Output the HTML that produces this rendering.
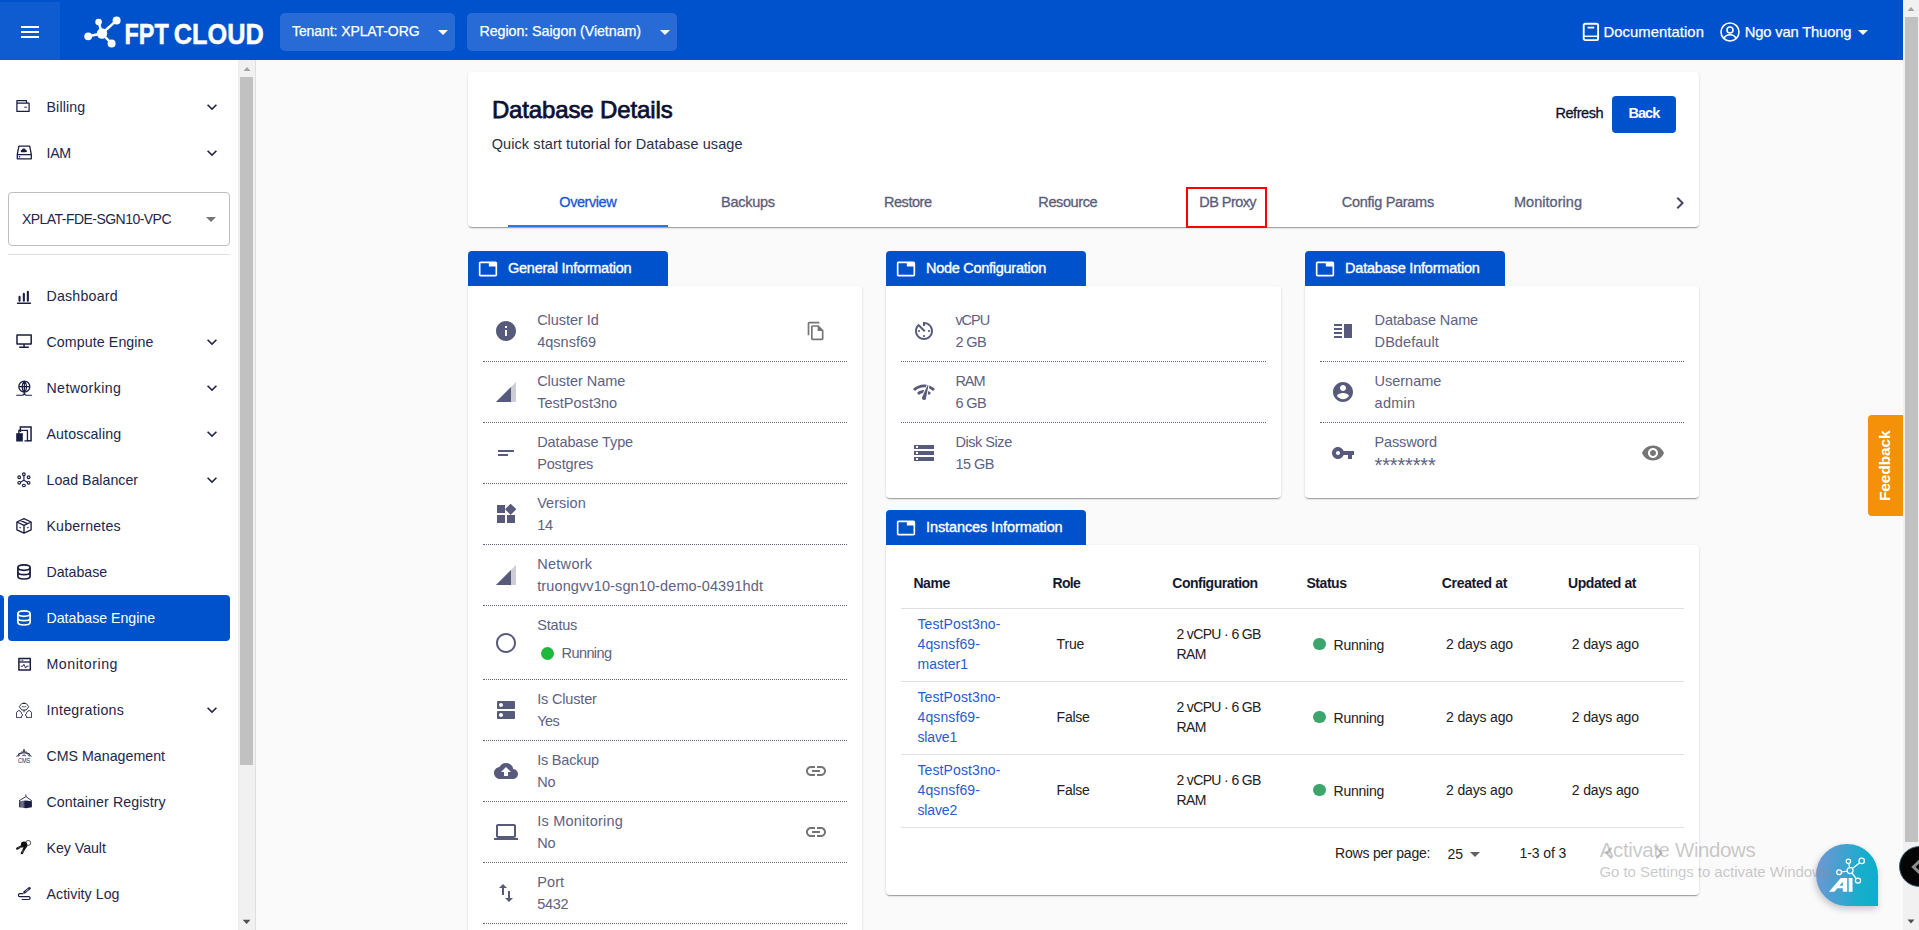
<!DOCTYPE html>
<html><head><meta charset="utf-8"><title>Database Details</title><style>
html,body{margin:0;padding:0}
body{width:1919px;height:930px;overflow:hidden;position:relative;background:#fafafa;font-family:"Liberation Sans", sans-serif;}
.a{position:absolute;display:block}
.t{position:absolute;white-space:pre;line-height:1;font-family:"Liberation Sans", sans-serif;}
</style></head>
<body>
<div class="a" style="left:0px;top:0px;width:1903px;height:60px;background:#0052cc;"></div>
<div class="a" style="left:0px;top:2px;width:60px;height:58px;background:#0f5bd0;"></div>
<div class="a" style="left:21px;top:26px;width:18px;height:2px;background:#fff;"></div>
<div class="a" style="left:21px;top:31px;width:18px;height:2px;background:#fff;"></div>
<div class="a" style="left:21px;top:36px;width:18px;height:2px;background:#fff;"></div>
<svg class="a" style="left:84px;top:16px;" width="38" height="32" viewBox="0 0 38 32" fill="#fff"><g stroke="#fff" stroke-width="2.5" stroke-linecap="round"><line x1="4.2" y1="20.3" x2="18" y2="17.5"/><line x1="18" y1="17.5" x2="14.6" y2="6"/><line x1="18" y1="17.5" x2="32.6" y2="4.4"/><line x1="18" y1="17.5" x2="27.6" y2="27.6"/></g><circle cx="4.2" cy="20.3" r="3.9"/><circle cx="18" cy="17.5" r="5.200"/><circle cx="14.6" cy="6" r="3.3"/><circle cx="32.6" cy="4.4" r="4"/><circle cx="27.6" cy="27.6" r="4"/></svg>
<svg class="a" style="left:124px;top:18px" width="144" height="32" viewBox="0 0 144 32"><g font-family="Liberation Sans, sans-serif" font-weight="700" font-size="30" fill="#fff" stroke="#fff" stroke-width=".5"><text x="0.500" y="26.1" textLength="44.3" lengthAdjust="spacingAndGlyphs">FPT</text><text x="49.700" y="26.1" textLength="90" lengthAdjust="spacingAndGlyphs">CLOUD</text></g></svg>
<div class="a" style="left:280px;top:13px;width:175px;height:38px;background:#286bd6;border-radius:5px;"></div>
<div class="a" style="left:467px;top:13px;width:210px;height:38px;background:#286bd6;border-radius:5px;"></div>
<span class="t" style="left:292.00px;top:24.25px;font-size:14px;color:#fff;letter-spacing:-0.083px;-webkit-text-stroke:.25px #fff;">Tenant: XPLAT-ORG</span>
<span class="t" style="left:479.50px;top:24.11px;font-size:14.3px;color:#fff;letter-spacing:-0.081px;-webkit-text-stroke:.25px #fff;">Region: Saigon (Vietnam)</span>
<svg class="a" style="left:431px;top:20px;" width="24" height="24" viewBox="0 0 24 24" fill="#fff"><path d="M7 10l5 5 5-5z"/></svg>
<svg class="a" style="left:653px;top:20px;" width="24" height="24" viewBox="0 0 24 24" fill="#fff"><path d="M7 10l5 5 5-5z"/></svg>
<svg class="a" style="left:1582px;top:22px;" width="18" height="20" viewBox="0 0 18 20" fill="#fff"><rect x="1.7" y="1.7" width="14.4" height="16.4" rx="1.6" fill="none" stroke="#fff" stroke-width="1.9"/><path d="M1.7 14.3h14.4" stroke="#fff" stroke-width="1.5"/><path d="M5.6 5.6h6.6" stroke="#fff" stroke-width="1.8"/></svg>
<span class="t" style="left:1603.40px;top:24.77px;font-size:14.8px;color:#fff;letter-spacing:0.082px;-webkit-text-stroke:.25px #fff;">Documentation</span>
<svg class="a" style="left:1720px;top:22px;" width="20" height="20" viewBox="0 0 20 20" fill="#fff"><circle cx="10" cy="10" r="9" fill="none" stroke="#fff" stroke-width="1.6"/><circle cx="10" cy="8" r="3" fill="none" stroke="#fff" stroke-width="1.6"/><path d="M4 16.300c1.200-2.600 3.500-3.600 6-3.600s4.800 1 6 3.600" fill="none" stroke="#fff" stroke-width="1.6"/></svg>
<span class="t" style="left:1744.80px;top:24.77px;font-size:14.8px;color:#fff;letter-spacing:-0.190px;-webkit-text-stroke:.25px #fff;">Ngo van Thuong</span>
<svg class="a" style="left:1851px;top:20px;" width="24" height="24" viewBox="0 0 24 24" fill="#fff"><path d="M7 10l5 5 5-5z"/></svg>
<div class="a" style="left:1903px;top:0px;width:16px;height:930px;background:#f1f1f1;"></div>
<div class="a" style="left:1905px;top:17px;width:13px;height:825px;background:#c1c1c1;"></div>
<svg class="a" style="left:1903px;top:0px;" width="16" height="17" viewBox="0 0 16 17" fill="#a3a3a3"><path d="M4.500 11l3.500-4 3.500 4z"/></svg>
<svg class="a" style="left:1903px;top:913px;" width="16" height="17" viewBox="0 0 16 17" fill="#505050"><path d="M4.500 6.500l3.500 4 3.500-4z"/></svg>
<div class="a" style="left:0px;top:60px;width:238px;height:870px;background:#fff;"></div>
<div class="a" style="left:238px;top:60px;width:18px;height:870px;background:#f1f1f1;box-shadow:inset 1px 0 0 #ececec, inset -1px 0 0 #dedede;"></div>
<div class="a" style="left:240px;top:77px;width:13px;height:688px;background:#c1c1c1;"></div>
<svg class="a" style="left:239px;top:60px;" width="16" height="17" viewBox="0 0 16 17" fill="#a3a3a3"><path d="M4.500 11l3.500-4 3.500 4z"/></svg>
<svg class="a" style="left:239px;top:913px;" width="16" height="17" viewBox="0 0 16 17" fill="#505050"><path d="M3.700 6.800l3.900 4.300 3.900-4.300z"/></svg>
<div class="a" style="left:0px;top:595px;width:4px;height:46px;background:#0052cc;border-radius:0 4px 4px 0;"></div>
<div class="a" style="left:8px;top:595px;width:222px;height:46px;background:#0052cc;border-radius:4px;"></div>
<svg class="a" style="left:16px;top:98.5px;" width="16" height="16" viewBox="0 0 16 16" fill="#1a1d44"><path fill="none" stroke="#1a1d44" stroke-width="1.25" stroke-linejoin="round" d="M0.9 4.1h12.2v8.3H0.9zM0.9 4.1V1.7h9.6v2.4"/><rect x="8.3" y="7.7" width="2.6" height="1"/></svg>
<span class="t" style="left:46.50px;top:99.66px;font-size:14.2px;color:#23264b;letter-spacing:0.149px;">Billing</span>
<svg class="a" style="left:202px;top:96.5px;" width="20" height="20" viewBox="0 0 24 24" fill="#23264b"><path d="M16.59 8.59L12 13.170 7.410 8.590 6 10l6 6 6-6z"/></svg>
<svg class="a" style="left:16px;top:144.5px;" width="16" height="16" viewBox="0 0 16 16" fill="#1a1d44"><path fill="none" stroke="#1a1d44" stroke-width="1.3" stroke-linejoin="round" d="M1.3 9.300L2.900 1.200h10.800l1.600 8.100v4.500H1.300zM1.300 9.600h14"/><path d="M6.300 7.200c-1 0-1.600-.5-1.600-1.300 0-.6.500-1.100 1.200-1.200.3-.7 1-1.200 1.900-1.200 1 0 1.700.5 1.900 1.400.9.100 1.400.5 1.400 1.200s-.6 1.100-1.500 1.100z"/><rect x="2.900" y="11.100" width="1.300" height="1.300"/></svg>
<span class="t" style="left:46.50px;top:145.66px;font-size:14.2px;color:#23264b;letter-spacing:-0.311px;">IAM</span>
<svg class="a" style="left:202px;top:142.5px;" width="20" height="20" viewBox="0 0 24 24" fill="#23264b"><path d="M16.59 8.59L12 13.170 7.410 8.590 6 10l6 6 6-6z"/></svg>
<svg class="a" style="left:16px;top:288px;" width="16" height="16" viewBox="0 0 16 16" fill="#1a1d44"><path d="M3.550 8.800v4M7.850 5.900v6.900M11.850 3.700v9.100" stroke="#1a1d44" stroke-width="2.100" stroke-linecap="round"/><path d="M1.500 15.200h13" stroke="#1a1d44" stroke-width="1.400" stroke-linecap="round"/></svg>
<span class="t" style="left:46.50px;top:289.16px;font-size:14.2px;color:#23264b;letter-spacing:0.209px;">Dashboard</span>
<svg class="a" style="left:16px;top:334px;" width="16" height="16" viewBox="0 0 16 16" fill="#1a1d44"><path fill="none" stroke="#1a1d44" stroke-width="1.500" stroke-linejoin="round" d="M1 1h14.200v9H1z"/><rect x="7.300" y="10" width="1.500" height="3"/><rect x="3" y="12.500" width="10" height="1.500" rx=".7"/></svg>
<span class="t" style="left:46.50px;top:335.16px;font-size:14.2px;color:#23264b;letter-spacing:0.101px;">Compute Engine</span>
<svg class="a" style="left:202px;top:332.0px;" width="20" height="20" viewBox="0 0 24 24" fill="#23264b"><path d="M16.59 8.59L12 13.170 7.410 8.590 6 10l6 6 6-6z"/></svg>
<svg class="a" style="left:16px;top:380px;" width="16" height="16" viewBox="0 0 16 16" fill="#1a1d44"><g fill="none" stroke="#1a1d44" stroke-width="1.250"><circle cx="8.350" cy="6.650" r="5.500"/><path d="M2.900 6.650h10.900M8.350 1.200c-3 2.700-3 8.200 0 10.900M8.350 1.200c3 2.700 3 8.200 0 10.900M8.350 1.200v11"/><path d="M.3 15.300h5.900c1.300 0 2.100-1.300 2.150-3 .05 1.700.85 3 2.150 3h5.400" stroke-width="1.100"/></g></svg>
<span class="t" style="left:46.50px;top:381.16px;font-size:14.2px;color:#23264b;letter-spacing:0.373px;">Networking</span>
<svg class="a" style="left:202px;top:378.0px;" width="20" height="20" viewBox="0 0 24 24" fill="#23264b"><path d="M16.59 8.59L12 13.170 7.410 8.590 6 10l6 6 6-6z"/></svg>
<svg class="a" style="left:16px;top:426px;" width="16" height="16" viewBox="0 0 16 16" fill="#1a1d44"><path fill="none" stroke="#1a1d44" stroke-width="1.500" d="M4.350 6V1.050h10.700v13.700h-4"/><path fill="none" stroke="#1a1d44" stroke-width="1.300" d="M2.850 8V4.300h8.600v10.500h-3"/><rect x=".2" y="7.200" width="6.600" height="8.300"/></svg>
<span class="t" style="left:46.50px;top:427.16px;font-size:14.2px;color:#23264b;letter-spacing:0.122px;">Autoscaling</span>
<svg class="a" style="left:202px;top:424.0px;" width="20" height="20" viewBox="0 0 24 24" fill="#23264b"><path d="M16.59 8.59L12 13.170 7.410 8.590 6 10l6 6 6-6z"/></svg>
<svg class="a" style="left:16px;top:472px;" width="16" height="16" viewBox="0 0 16 16" fill="#1a1d44"><g fill="none" stroke="#1a1d44" stroke-width="1.150"><circle cx="7.900" cy="2.200" r="1.350"/><circle cx="3.200" cy="5.200" r="1.350"/><circle cx="12.600" cy="5.200" r="1.350"/><circle cx="3.200" cy="10.800" r="1.350"/><circle cx="12.600" cy="10.800" r="1.350"/><ellipse cx="7.900" cy="13.400" rx="1.500" ry="1.200"/><path d="M7.900 3.500v5M7.900 8.200l-3.600 2M7.900 8.200l3.600 2"/></g></svg>
<span class="t" style="left:46.50px;top:473.16px;font-size:14.2px;color:#23264b;">Load Balancer</span>
<svg class="a" style="left:202px;top:470.0px;" width="20" height="20" viewBox="0 0 24 24" fill="#23264b"><path d="M16.59 8.59L12 13.170 7.410 8.590 6 10l6 6 6-6z"/></svg>
<svg class="a" style="left:16px;top:518px;" width="16" height="16" viewBox="0 0 16 16" fill="#1a1d44"><path fill="none" stroke="#1a1d44" stroke-width="1.350" stroke-linejoin="round" d="M8 .7l7.100 3.300v7.800L8 15.100.9 11.800V4zM.9 4L8 7.300l7.100-3.300M8 7.300v7.800M4.300 2.400l7.100 3.300"/><path d="M3.400 9.300l1.600.7M11 10l1.600-.7" stroke="#1a1d44" stroke-width="1"/></svg>
<span class="t" style="left:46.50px;top:519.16px;font-size:14.2px;color:#23264b;letter-spacing:0.162px;">Kubernetes</span>
<svg class="a" style="left:16px;top:564px;" width="16" height="16" viewBox="0 0 16 16" fill="#1a1d44"><g fill="none" stroke="#1a1d44" stroke-width="1.700"><ellipse cx="8" cy="3.600" rx="6.100" ry="2.700"/><path d="M1.900 3.600v8.700c0 1.500 2.700 2.700 6.100 2.700s6.100-1.200 6.100-2.700V3.600M1.900 7.900c0 1.500 2.700 2.700 6.100 2.700s6.100-1.200 6.100-2.700"/></g></svg>
<span class="t" style="left:46.50px;top:565.16px;font-size:14.2px;color:#23264b;letter-spacing:-0.017px;">Database</span>
<svg class="a" style="left:16px;top:610px;" width="16" height="16" viewBox="0 0 16 16" fill="#fff"><g fill="none" stroke="#fff" stroke-width="1.700"><ellipse cx="8" cy="3.600" rx="6.100" ry="2.700"/><path d="M1.900 3.600v8.700c0 1.500 2.700 2.700 6.100 2.700s6.100-1.200 6.100-2.700V3.600M1.900 7.900c0 1.500 2.700 2.700 6.100 2.700s6.100-1.200 6.100-2.700"/></g></svg>
<span class="t" style="left:46.50px;top:611.16px;font-size:14.2px;color:#fff;letter-spacing:-0.017px;">Database Engine</span>
<svg class="a" style="left:16px;top:656px;" width="16" height="16" viewBox="0 0 16 16" fill="#1a1d44"><path fill="none" stroke="#1a1d44" stroke-width="1.500" stroke-linejoin="round" d="M2.900 2.600h11.400v11.500H2.900z"/><path d="M2.900 6h11.400" stroke="#1a1d44" stroke-width="1.300"/><path d="M4.500 4.300h3.300" stroke="#1a1d44" stroke-width=".9" stroke-dasharray="1 .5"/><path fill="none" d="M4.800 10.200h2.100l1-1.900 1.700 3.800 1-1.900h2" stroke="#1a1d44" stroke-width=".9"/></svg>
<span class="t" style="left:46.50px;top:657.16px;font-size:14.2px;color:#23264b;letter-spacing:0.525px;">Monitoring</span>
<svg class="a" style="left:16px;top:702px;" width="16" height="16" viewBox="0 0 16 16" fill="#1a1d44"><g fill="none" stroke="#1a1d44" stroke-width=".9" stroke-linejoin="round"><path d="M5.800 1.500h4.400l2.600 3.200-2.600 3.300H5.800L3.200 4.700z"/><path d="M5.800 5.100l1-.8 1 .8M8.300 5.100l1-.8 1 .8M8 .2v1.300M8 8v2.300"/><path d="M.4 15.700v-5.300L2.900 8.300l2.500 2.100v1.300l1.500 1.200-1.500 1.200v1.600zM15.600 15.700v-5.300l-2.500-2.100-2.500 2.100v1.300l-1.500 1.200 1.500 1.200v1.600z"/></g></svg>
<span class="t" style="left:46.50px;top:703.16px;font-size:14.2px;color:#23264b;letter-spacing:0.297px;">Integrations</span>
<svg class="a" style="left:202px;top:700.0px;" width="20" height="20" viewBox="0 0 24 24" fill="#23264b"><path d="M16.59 8.59L12 13.170 7.410 8.590 6 10l6 6 6-6z"/></svg>
<svg class="a" style="left:16px;top:748px;" width="16" height="16" viewBox="0 0 16 16" fill="#1a1d44"><g fill="none" stroke="#1a1d44" stroke-width=".9" stroke-linejoin="round"><path d="M.4 8.300l2-.9.300-1.800 1.900-.2.900-1.600 1.700.6L8 1.200l.8 3.200 1.700-.6.900 1.600 1.900.2.300 1.800 2 .9"/><path d="M2.700 8.500C3.200 6 5.500 4.900 8 4.900s4.800 1.100 5.300 3.600M6.300 8.300c.2-1.700 3.200-1.700 3.400 0"/></g><text x="8.100" y="14.600" font-size="6.400" text-anchor="middle" font-family="Liberation Sans, sans-serif" textLength="12.400" lengthAdjust="spacingAndGlyphs">CMS</text></svg>
<span class="t" style="left:46.50px;top:749.16px;font-size:14.2px;color:#23264b;letter-spacing:0.016px;">CMS Management</span>
<svg class="a" style="left:16px;top:794px;" width="16" height="16" viewBox="0 0 16 16" fill="#1a1d44"><path d="M3 7.200l6.900-.8 6 .8v6.100l-6 1-6.900-1z"/><path fill="none" d="M9.900.4v2.200M3 6.800l6.900-4.200 6 4.200" stroke="#1a1d44" stroke-width=".9"/><path d="M4.200 7v7M5.400 7v7M6.600 7v7.200M7.800 6.800v7.500" stroke="#fff" stroke-width=".4"/></svg>
<span class="t" style="left:46.50px;top:795.16px;font-size:14.2px;color:#23264b;letter-spacing:0.100px;">Container Registry</span>
<svg class="a" style="left:16px;top:840px;" width="16" height="16" viewBox="0 0 16 16" fill="#1a1d44"><circle cx="12.200" cy="2.900" r="2.500" fill="none" stroke="#111" stroke-width=".7"/><circle cx="8" cy="4.500" r="3.100" fill="#111"/><path d="M6.700 5.800L1.300 8.600M9.400 6.300l-3.500 6.800" fill="none" stroke="#111" stroke-width="2.300" stroke-linecap="round"/><path d="M10.400 5.500l-1.200 2" stroke="#111" stroke-width="2.200" stroke-linecap="round"/><path d="M2.600 7.400l.6 1.100M4 6.700l.6 1.100M6.400 10.300l1.100.6M5.700 11.600l1.100.6" stroke="#fff" stroke-width=".5"/></svg>
<span class="t" style="left:46.50px;top:841.16px;font-size:14.2px;color:#23264b;letter-spacing:-0.032px;">Key Vault</span>
<svg class="a" style="left:16px;top:886px;" width="16" height="16" viewBox="0 0 16 16" fill="#1a1d44"><path fill="none" stroke="#1a1d44" stroke-width="1.200" stroke-linecap="round" d="M7 7.700H3.900c-2 0-2 3 0 3H12.700c1.900 0 1.900 2.800 0 2.800H6.200"/><path d="M8.500 6.300l5-4" stroke="#1a1d44" stroke-width="2.600" stroke-linecap="round"/><path d="M9.800 5.250l2.400-1.900" stroke="#fff" stroke-width=".8" stroke-linecap="round"/></svg>
<span class="t" style="left:46.50px;top:887.16px;font-size:14.2px;color:#23264b;letter-spacing:0.038px;">Activity Log</span>
<div class="a" style="left:8px;top:192px;width:222px;height:54px;background:#fff;box-sizing:border-box;border:1px solid #bdbdbd;border-radius:4px;"></div>
<span class="t" style="left:22.00px;top:212.25px;font-size:14px;color:#23264b;letter-spacing:-0.539px;">XPLAT-FDE-SGN10-VPC</span>
<svg class="a" style="left:199px;top:207px;" width="24" height="24" viewBox="0 0 24 24" fill="#757575"><path d="M7 10l5 5 5-5z"/></svg>
<div class="a" style="left:8px;top:254px;width:222px;height:1px;background:#dfe0ea;"></div>
<div class="a" style="left:468px;top:72px;width:1231px;height:155px;background:#fff;border-radius:4px;box-shadow:0 2px 1px -1px rgba(0,0,0,.2),0 1px 1px 0 rgba(0,0,0,.14),0 1px 3px 0 rgba(0,0,0,.12);"></div>
<span class="t" style="left:491.90px;top:98.43px;font-size:24px;color:#0c1033;letter-spacing:-0.135px;-webkit-text-stroke:.75px #0c1033;">Database Details</span>
<span class="t" style="left:491.70px;top:136.61px;font-size:14.5px;color:#2b2e4a;letter-spacing:0.091px;">Quick start tutorial for Database usage</span>
<span class="t" style="left:1555.40px;top:106.01px;font-size:14.5px;color:#0c1033;letter-spacing:-0.440px;-webkit-text-stroke:.3px #0c1033;">Refresh</span>
<div class="a" style="left:1612px;top:96px;width:64px;height:37px;background:#0052cc;border-radius:4px;"></div>
<span class="t" style="left:1628.50px;top:106.01px;font-size:14.5px;color:#fff;font-weight:700;letter-spacing:-0.968px;">Back</span>
<span class="t" style="left:559.29px;top:194.61px;font-size:14.5px;color:#1a56d0;letter-spacing:-0.430px;-webkit-text-stroke:.3px #1a56d0;">Overview</span>
<span class="t" style="left:721.01px;top:194.61px;font-size:14.5px;color:#5a5d78;letter-spacing:-0.275px;-webkit-text-stroke:.3px #5a5d78;">Backups</span>
<span class="t" style="left:883.93px;top:194.61px;font-size:14.5px;color:#5a5d78;letter-spacing:-0.440px;-webkit-text-stroke:.3px #5a5d78;">Restore</span>
<span class="t" style="left:1038.31px;top:194.61px;font-size:14.5px;color:#5a5d78;letter-spacing:-0.383px;-webkit-text-stroke:.3px #5a5d78;">Resource</span>
<span class="t" style="left:1199.37px;top:194.61px;font-size:14.5px;color:#5a5d78;letter-spacing:-0.569px;-webkit-text-stroke:.3px #5a5d78;">DB Proxy</span>
<span class="t" style="left:1341.85px;top:194.61px;font-size:14.5px;color:#5a5d78;letter-spacing:-0.300px;-webkit-text-stroke:.3px #5a5d78;">Config Params</span>
<span class="t" style="left:1514.01px;top:194.61px;font-size:14.5px;color:#5a5d78;letter-spacing:0.030px;-webkit-text-stroke:.3px #5a5d78;">Monitoring</span>
<div class="a" style="left:508px;top:225px;width:160px;height:2px;background:#2b78e4;"></div>
<div class="a" style="left:1186px;top:187px;width:81px;height:40.5px;box-sizing:border-box;border:2px solid #ff0000;"></div>
<svg class="a" style="left:1668px;top:191px;" width="24" height="24" viewBox="0 0 24 24" fill="#44475f"><path d="M10 6L8.590 7.410 13.170 12l-4.580 4.590L10 18l6-6z"/></svg>
<div class="a" style="left:468px;top:286px;width:394px;height:700px;background:#fff;border-radius:0 4px 4px 4px;box-shadow:0 2px 1px -1px rgba(0,0,0,.2),0 1px 1px 0 rgba(0,0,0,.14),0 1px 3px 0 rgba(0,0,0,.12);"></div>
<div class="a" style="left:886px;top:286px;width:395px;height:212px;background:#fff;border-radius:0 4px 4px 4px;box-shadow:0 2px 1px -1px rgba(0,0,0,.2),0 1px 1px 0 rgba(0,0,0,.14),0 1px 3px 0 rgba(0,0,0,.12);"></div>
<div class="a" style="left:1305px;top:286px;width:394px;height:212px;background:#fff;border-radius:0 4px 4px 4px;box-shadow:0 2px 1px -1px rgba(0,0,0,.2),0 1px 1px 0 rgba(0,0,0,.14),0 1px 3px 0 rgba(0,0,0,.12);"></div>
<div class="a" style="left:886px;top:545px;width:813px;height:350px;background:#fff;border-radius:0 4px 4px 4px;box-shadow:0 2px 1px -1px rgba(0,0,0,.2),0 1px 1px 0 rgba(0,0,0,.14),0 1px 3px 0 rgba(0,0,0,.12);"></div>
<div class="a" style="left:468px;top:251px;width:200px;height:35px;background:#0052cc;border-radius:4px 4px 0 0;"></div>
<svg class="a" style="left:478px;top:258.5px;" width="20" height="20" viewBox="0 0 24 24" fill="#fff"><path d="M21 3H3c-1.100 0-2 .9-2 2v14c0 1.100.9 2 2 2h18c1.100 0 2-.9 2-2V5c0-1.100-.9-2-2-2zm0 16H3V5h10v4h8v10z"/></svg>
<span class="t" style="left:508.00px;top:261.31px;font-size:14.5px;color:#fff;letter-spacing:-0.256px;-webkit-text-stroke:.35px #fff;">General Information</span>
<div class="a" style="left:886px;top:251px;width:200px;height:35px;background:#0052cc;border-radius:4px 4px 0 0;"></div>
<svg class="a" style="left:896px;top:258.5px;" width="20" height="20" viewBox="0 0 24 24" fill="#fff"><path d="M21 3H3c-1.100 0-2 .9-2 2v14c0 1.100.9 2 2 2h18c1.100 0 2-.9 2-2V5c0-1.100-.9-2-2-2zm0 16H3V5h10v4h8v10z"/></svg>
<span class="t" style="left:926.00px;top:261.31px;font-size:14.5px;color:#fff;letter-spacing:-0.275px;-webkit-text-stroke:.35px #fff;">Node Configuration</span>
<div class="a" style="left:1305px;top:251px;width:200px;height:35px;background:#0052cc;border-radius:4px 4px 0 0;"></div>
<svg class="a" style="left:1315px;top:258.5px;" width="20" height="20" viewBox="0 0 24 24" fill="#fff"><path d="M21 3H3c-1.100 0-2 .9-2 2v14c0 1.100.9 2 2 2h18c1.100 0 2-.9 2-2V5c0-1.100-.9-2-2-2zm0 16H3V5h10v4h8v10z"/></svg>
<span class="t" style="left:1345.00px;top:261.31px;font-size:14.5px;color:#fff;letter-spacing:-0.197px;-webkit-text-stroke:.35px #fff;">Database Information</span>
<div class="a" style="left:886px;top:510px;width:200px;height:35px;background:#0052cc;border-radius:4px 4px 0 0;"></div>
<svg class="a" style="left:896px;top:517.5px;" width="20" height="20" viewBox="0 0 24 24" fill="#fff"><path d="M21 3H3c-1.100 0-2 .9-2 2v14c0 1.100.9 2 2 2h18c1.100 0 2-.9 2-2V5c0-1.100-.9-2-2-2zm0 16H3V5h10v4h8v10z"/></svg>
<span class="t" style="left:926.00px;top:520.31px;font-size:14.5px;color:#fff;letter-spacing:-0.097px;-webkit-text-stroke:.35px #fff;">Instances Information</span>
<svg class="a" style="left:494px;top:319px;" width="24" height="24" viewBox="0 0 24 24" fill="#575a7b"><path d="M12 2C6.480 2 2 6.480 2 12s4.480 10 10 10 10-4.480 10-10S17.520 2 12 2zm1 15h-2v-6h2v6zm0-8h-2V7h2v2z"/></svg>
<span class="t" style="left:537.20px;top:313.01px;font-size:14.5px;color:#5e6182;letter-spacing:-0.056px;">Cluster Id</span>
<span class="t" style="left:537.20px;top:335.01px;font-size:14.5px;color:#5e6182;letter-spacing:0.018px;">4qsnsf69</span>
<svg class="a" style="left:806px;top:321px;" width="20" height="20" viewBox="0 0 24 24" fill="#757575"><path d="M16 1H4c-1.100 0-2 .9-2 2v14h2V3h12V1zm-1 4H8c-1.100 0-1.990.9-1.990 2L6 21c0 1.100.89 2 1.990 2H19c1.100 0 2-.9 2-2V11l-6-6zM8 21V7h6v5h5v9H8z"/></svg>
<div class="a" style="left:483px;top:361px;width:364px;height:0px;border-top:1px dotted #5e6182;"></div>
<svg class="a" style="left:494px;top:380px;" width="24" height="24" viewBox="0 0 24 24" fill="#575a7b"><path fill-opacity=".3" d="M2 22h20V2z"/><path d="M17 7L2 22h15z"/></svg>
<span class="t" style="left:537.20px;top:374.01px;font-size:14.5px;color:#5e6182;letter-spacing:-0.037px;">Cluster Name</span>
<span class="t" style="left:537.20px;top:396.01px;font-size:14.5px;color:#5e6182;letter-spacing:0.017px;">TestPost3no</span>
<div class="a" style="left:483px;top:422px;width:364px;height:0px;border-top:1px dotted #5e6182;"></div>
<svg class="a" style="left:494px;top:441px;" width="24" height="24" viewBox="0 0 24 24" fill="#575a7b"><path d="M4 9h16v2H4zm0 4h10v2H4z"/></svg>
<span class="t" style="left:537.20px;top:435.01px;font-size:14.5px;color:#5e6182;letter-spacing:-0.106px;">Database Type</span>
<span class="t" style="left:537.20px;top:457.01px;font-size:14.5px;color:#5e6182;letter-spacing:-0.154px;">Postgres</span>
<div class="a" style="left:483px;top:483px;width:364px;height:0px;border-top:1px dotted #5e6182;"></div>
<svg class="a" style="left:494px;top:502px;" width="24" height="24" viewBox="0 0 24 24" fill="#575a7b"><path d="M13 13v8h8v-8h-8zM3 21h8v-8H3v8zM3 3v8h8V3H3zm13.660-1.310L11 7.340 16.660 13l5.660-5.660-5.660-5.650z"/></svg>
<span class="t" style="left:537.20px;top:496.01px;font-size:14.5px;color:#5e6182;letter-spacing:0.032px;">Version</span>
<span class="t" style="left:537.20px;top:518.01px;font-size:14.5px;color:#5e6182;letter-spacing:-0.220px;">14</span>
<div class="a" style="left:483px;top:544px;width:364px;height:0px;border-top:1px dotted #5e6182;"></div>
<svg class="a" style="left:494px;top:563px;" width="24" height="24" viewBox="0 0 24 24" fill="#575a7b"><path fill-opacity=".3" d="M2 22h20V2z"/><path d="M17 7L2 22h15z"/></svg>
<span class="t" style="left:537.20px;top:557.01px;font-size:14.5px;color:#5e6182;letter-spacing:0.288px;">Network</span>
<span class="t" style="left:537.20px;top:579.01px;font-size:14.5px;color:#5e6182;letter-spacing:0.114px;">truongvv10-sgn10-demo-04391hdt</span>
<div class="a" style="left:483px;top:605px;width:364px;height:0px;border-top:1px dotted #5e6182;"></div>
<svg class="a" style="left:494px;top:630.8px;" width="24" height="24" viewBox="0 0 24 24" fill="#575a7b"><path d="M12 2C6.480 2 2 6.480 2 12s4.480 10 10 10 10-4.480 10-10S17.520 2 12 2zm0 18c-4.420 0-8-3.580-8-8s3.580-8 8-8 8 3.580 8 8-3.580 8-8 8z"/></svg>
<span class="t" style="left:537.20px;top:618.01px;font-size:14.5px;color:#5e6182;letter-spacing:-0.185px;">Status</span>
<div class="a" style="left:540.5px;top:647px;width:13px;height:13px;background:#1db93c;border-radius:50%;"></div>
<span class="t" style="left:561.50px;top:645.81px;font-size:14.5px;color:#5e6182;letter-spacing:-0.574px;">Running</span>
<div class="a" style="left:483px;top:679px;width:364px;height:0px;border-top:1px dotted #5e6182;"></div>
<svg class="a" style="left:494px;top:698px;" width="24" height="24" viewBox="0 0 24 24" fill="#575a7b"><path d="M20 13H4c-.55 0-1 .45-1 1v6c0 .55.45 1 1 1h16c.55 0 1-.45 1-1v-6c0-.55-.45-1-1-1zM7 19c-1.100 0-2-.9-2-2s.9-2 2-2 2 .9 2 2-.9 2-2 2zM20 3H4c-.55 0-1 .45-1 1v6c0 .55.45 1 1 1h16c.55 0 1-.45 1-1V4c0-.55-.45-1-1-1zM7 9c-1.100 0-2-.9-2-2s.9-2 2-2 2 .9 2 2-.9 2-2 2z"/></svg>
<span class="t" style="left:537.20px;top:692.01px;font-size:14.5px;color:#5e6182;letter-spacing:-0.165px;">Is Cluster</span>
<span class="t" style="left:537.20px;top:714.01px;font-size:14.5px;color:#5e6182;letter-spacing:-0.552px;">Yes</span>
<div class="a" style="left:483px;top:740px;width:364px;height:0px;border-top:1px dotted #5e6182;"></div>
<svg class="a" style="left:494px;top:759px;" width="24" height="24" viewBox="0 0 24 24" fill="#575a7b"><path d="M19.350 10.040C18.670 6.590 15.640 4 12 4 9.110 4 6.600 5.640 5.350 8.040 2.340 8.360 0 10.910 0 14c0 3.310 2.690 6 6 6h13c2.760 0 5-2.240 5-5 0-2.640-2.050-4.780-4.650-4.960zM14 13v4h-4v-4H7l5-5 5 5h-3z"/></svg>
<span class="t" style="left:537.20px;top:753.01px;font-size:14.5px;color:#5e6182;letter-spacing:-0.219px;">Is Backup</span>
<span class="t" style="left:537.20px;top:775.01px;font-size:14.5px;color:#5e6182;letter-spacing:-0.073px;">No</span>
<svg class="a" style="left:804px;top:759px;" width="24" height="24" viewBox="0 0 24 24" fill="#757575"><path d="M3.900 12c0-1.710 1.390-3.100 3.100-3.100h4V7H7c-2.760 0-5 2.240-5 5s2.240 5 5 5h4v-1.900H7c-1.710 0-3.100-1.390-3.100-3.100zM8 13h8v-2H8v2zm9-6h-4v1.900h4c1.710 0 3.100 1.390 3.100 3.100s-1.390 3.100-3.100 3.100h-4V17h4c2.760 0 5-2.240 5-5s-2.240-5-5-5z"/></svg>
<div class="a" style="left:483px;top:801px;width:364px;height:0px;border-top:1px dotted #5e6182;"></div>
<svg class="a" style="left:494px;top:820px;" width="24" height="24" viewBox="0 0 24 24" fill="#575a7b"><path d="M20 18c1.100 0 1.990-.9 1.990-2L22 6c0-1.100-.9-2-2-2H4c-1.100 0-2 .9-2 2v10c0 1.100.9 2 2 2H0v2h24v-2h-4zM4 6h16v10H4V6z"/></svg>
<span class="t" style="left:537.20px;top:814.01px;font-size:14.5px;color:#5e6182;letter-spacing:0.214px;">Is Monitoring</span>
<span class="t" style="left:537.20px;top:836.01px;font-size:14.5px;color:#5e6182;letter-spacing:-0.073px;">No</span>
<svg class="a" style="left:804px;top:820px;" width="24" height="24" viewBox="0 0 24 24" fill="#757575"><path d="M3.900 12c0-1.710 1.390-3.100 3.100-3.100h4V7H7c-2.760 0-5 2.240-5 5s2.240 5 5 5h4v-1.900H7c-1.710 0-3.100-1.390-3.100-3.100zM8 13h8v-2H8v2zm9-6h-4v1.900h4c1.710 0 3.100 1.390 3.100 3.100s-1.390 3.100-3.100 3.100h-4V17h4c2.760 0 5-2.240 5-5s-2.240-5-5-5z"/></svg>
<div class="a" style="left:483px;top:862px;width:364px;height:0px;border-top:1px dotted #5e6182;"></div>
<svg class="a" style="left:494px;top:881px;" width="24" height="24" viewBox="0 0 24 24" fill="#575a7b"><path d="M16 17.010V10h-2v7.010h-3L15 21l4-3.990h-3zM9 3L5 6.990h3V14h2V6.990h3L9 3z"/></svg>
<span class="t" style="left:537.20px;top:875.01px;font-size:14.5px;color:#5e6182;letter-spacing:0.102px;">Port</span>
<span class="t" style="left:537.20px;top:897.01px;font-size:14.5px;color:#5e6182;letter-spacing:-0.266px;">5432</span>
<div class="a" style="left:483px;top:923px;width:364px;height:0px;border-top:1px dotted #5e6182;"></div>
<svg class="a" style="left:912.2px;top:319px;" width="24" height="24" viewBox="0 0 24 24" fill="#575a7b"><path d="M11 17c0 .55.45 1 1 1s1-.45 1-1-.45-1-1-1-1 .45-1 1zm0-14v4h2V5.080c3.390.49 6 3.390 6 6.920 0 3.870-3.130 7-7 7s-7-3.130-7-7c0-1.680.59-3.220 1.580-4.420L12 13l1.410-1.410-6.800-6.800v.02C4.420 6.450 3 9.050 3 12c0 4.970 4.020 9 9 9 4.970 0 9-4.030 9-9s-4.030-9-9-9h-1zm7 9c0-.55-.45-1-1-1s-1 .45-1 1 .45 1 1 1 1-.45 1-1zM6 12c0 .55.45 1 1 1s1-.45 1-1-.45-1-1-1-1 .45-1 1z"/></svg>
<span class="t" style="left:955.40px;top:313.01px;font-size:14.5px;color:#5e6182;letter-spacing:-1.044px;">vCPU</span>
<span class="t" style="left:955.40px;top:335.01px;font-size:14.5px;color:#5e6182;letter-spacing:-0.612px;">2 GB</span>
<div class="a" style="left:901px;top:361px;width:365px;height:0px;border-top:1px dotted #5e6182;"></div>
<svg class="a" style="left:912.2px;top:380px;" width="24" height="24" viewBox="0 0 24 24" fill="#575a7b"><path d="M15.900 5c-.17 0-.32.09-.41.23l-.07.15-5.180 11.650c-.16.29-.26.61-.26.96 0 1.110.9 2.010 2.010 2.010.96 0 1.770-.68 1.960-1.590l.01-.03L16.400 5.500c0-.28-.22-.5-.5-.5zM1 9l2 2c2.880-2.880 6.790-4.080 10.530-3.620l1.190-2.680C9.890 3.840 4.740 5.270 1 9zm20 2l2-2c-1.640-1.640-3.550-2.820-5.590-3.570l-.53 2.820c1.500.62 2.900 1.530 4.120 2.750zm-4 4l2-2c-.8-.8-1.700-1.420-2.660-1.890l-.55 2.920c.42.27.83.59 1.210.97zM5 13l2 2c1.130-1.130 2.560-1.790 4.030-2l1.280-2.880c-2.630-.08-5.300.87-7.310 2.880z"/></svg>
<span class="t" style="left:955.40px;top:374.01px;font-size:14.5px;color:#5e6182;letter-spacing:-1.011px;">RAM</span>
<span class="t" style="left:955.40px;top:396.01px;font-size:14.5px;color:#5e6182;letter-spacing:-0.612px;">6 GB</span>
<div class="a" style="left:901px;top:422px;width:365px;height:0px;border-top:1px dotted #5e6182;"></div>
<svg class="a" style="left:912.2px;top:441px;" width="24" height="24" viewBox="0 0 24 24" fill="#575a7b"><path d="M2 20h20v-4H2v4zm2-3h2v2H4v-2zM2 4v4h20V4H2zm4 3H4V5h2v2zm-4 7h20v-4H2v4zm2-3h2v2H4v-2z"/></svg>
<span class="t" style="left:955.40px;top:435.01px;font-size:14.5px;color:#5e6182;letter-spacing:-0.449px;">Disk Size</span>
<span class="t" style="left:955.40px;top:457.01px;font-size:14.5px;color:#5e6182;letter-spacing:-0.522px;">15 GB</span>
<svg class="a" style="left:1331.4px;top:319px;" width="24" height="24" viewBox="0 0 24 24" fill="#575a7b"><path d="M3 15h8v-2H3v2zm0 4h8v-2H3v2zm0-8h8V9H3v2zm0-6v2h8V5H3zm10 0h8v14h-8V5z"/></svg>
<span class="t" style="left:1374.60px;top:313.01px;font-size:14.5px;color:#5e6182;letter-spacing:-0.099px;">Database Name</span>
<span class="t" style="left:1374.60px;top:335.01px;font-size:14.5px;color:#5e6182;letter-spacing:0.068px;">DBdefault</span>
<div class="a" style="left:1320px;top:361px;width:364px;height:0px;border-top:1px dotted #5e6182;"></div>
<svg class="a" style="left:1331.4px;top:380px;" width="24" height="24" viewBox="0 0 24 24" fill="#575a7b"><path d="M12 2C6.480 2 2 6.480 2 12s4.480 10 10 10 10-4.480 10-10S17.520 2 12 2zm0 3c1.660 0 3 1.340 3 3s-1.340 3-3 3-3-1.340-3-3 1.340-3 3-3zm0 14.200c-2.500 0-4.710-1.280-6-3.220.03-1.990 4-3.080 6-3.080 1.990 0 5.970 1.090 6 3.080-1.290 1.940-3.500 3.220-6 3.220z"/></svg>
<span class="t" style="left:1374.60px;top:374.01px;font-size:14.5px;color:#5e6182;letter-spacing:-0.024px;">Username</span>
<span class="t" style="left:1374.60px;top:396.01px;font-size:14.5px;color:#5e6182;letter-spacing:0.220px;">admin</span>
<div class="a" style="left:1320px;top:422px;width:364px;height:0px;border-top:1px dotted #5e6182;"></div>
<svg class="a" style="left:1331.4px;top:441px;" width="24" height="24" viewBox="0 0 24 24" fill="#575a7b"><path d="M12.650 10C11.830 7.670 9.610 6 7 6c-3.310 0-6 2.690-6 6s2.690 6 6 6c2.610 0 4.830-1.670 5.650-4H17v4h4v-4h2v-4H12.650zM7 14c-1.100 0-2-.9-2-2s.9-2 2-2 2 .9 2 2-.9 2-2 2z"/></svg>
<span class="t" style="left:1374.60px;top:435.01px;font-size:14.5px;color:#5e6182;letter-spacing:-0.171px;">Password</span>
<span class="t" style="left:1374.60px;top:455.46px;font-size:20px;color:#5e6182;letter-spacing:-0.171px;">********</span>
<svg class="a" style="left:1641.4px;top:441px;" width="24" height="24" viewBox="0 0 24 24" fill="#757575"><path d="M12 4.500C7 4.500 2.730 7.610 1 12c1.730 4.390 6 7.500 11 7.500s9.270-3.110 11-7.500c-1.730-4.390-6-7.500-11-7.500zM12 17c-2.760 0-5-2.240-5-5s2.240-5 5-5 5 2.240 5 5-2.240 5-5 5zm0-8c-1.660 0-3 1.340-3 3s1.340 3 3 3 3-1.340 3-3-1.340-3-3-3z"/></svg>
<span class="t" style="left:913.40px;top:576.25px;font-size:14px;color:#16182e;font-weight:700;letter-spacing:-0.385px;">Name</span>
<span class="t" style="left:1052.60px;top:576.25px;font-size:14px;color:#16182e;font-weight:700;letter-spacing:-0.736px;">Role</span>
<span class="t" style="left:1172.30px;top:576.25px;font-size:14px;color:#16182e;font-weight:700;letter-spacing:-0.490px;">Configuration</span>
<span class="t" style="left:1306.40px;top:576.25px;font-size:14px;color:#16182e;font-weight:700;letter-spacing:-0.433px;">Status</span>
<span class="t" style="left:1441.80px;top:576.25px;font-size:14px;color:#16182e;font-weight:700;letter-spacing:-0.327px;">Created at</span>
<span class="t" style="left:1568.00px;top:576.25px;font-size:14px;color:#16182e;font-weight:700;letter-spacing:-0.434px;">Updated at</span>
<div class="a" style="left:901px;top:608px;width:783px;height:1px;background:#e0e0e0;"></div>
<span class="t" style="left:917.50px;top:616.65px;font-size:14px;color:#2a5ad0;letter-spacing:0.107px;">TestPost3no-</span>
<span class="t" style="left:917.50px;top:636.65px;font-size:14px;color:#2a5ad0;letter-spacing:0.113px;">4qsnsf69-</span>
<span class="t" style="left:917.50px;top:656.65px;font-size:14px;color:#2a5ad0;letter-spacing:-0.011px;">master1</span>
<span class="t" style="left:1056.60px;top:636.65px;font-size:14px;color:#212121;letter-spacing:-0.170px;">True</span>
<span class="t" style="left:1176.40px;top:626.65px;font-size:14px;color:#212121;letter-spacing:-0.630px;">2 vCPU · 6 GB</span>
<span class="t" style="left:1176.40px;top:646.65px;font-size:14px;color:#212121;letter-spacing:-0.542px;">RAM</span>
<div class="a" style="left:1313px;top:637.8px;width:12.6px;height:12.6px;background:#3ca56c;border-radius:50%;"></div>
<span class="t" style="left:1333.60px;top:637.65px;font-size:14px;color:#212121;letter-spacing:-0.251px;">Running</span>
<span class="t" style="left:1446.00px;top:636.65px;font-size:14px;color:#212121;letter-spacing:-0.150px;">2 days ago</span>
<span class="t" style="left:1571.80px;top:636.65px;font-size:14px;color:#212121;letter-spacing:-0.150px;">2 days ago</span>
<div class="a" style="left:901px;top:681px;width:783px;height:1px;background:#e0e0e0;"></div>
<span class="t" style="left:917.50px;top:689.65px;font-size:14px;color:#2a5ad0;letter-spacing:0.107px;">TestPost3no-</span>
<span class="t" style="left:917.50px;top:709.65px;font-size:14px;color:#2a5ad0;letter-spacing:0.113px;">4qsnsf69-</span>
<span class="t" style="left:917.50px;top:729.65px;font-size:14px;color:#2a5ad0;letter-spacing:-0.161px;">slave1</span>
<span class="t" style="left:1056.60px;top:709.65px;font-size:14px;color:#212121;letter-spacing:-0.247px;">False</span>
<span class="t" style="left:1176.40px;top:699.65px;font-size:14px;color:#212121;letter-spacing:-0.630px;">2 vCPU · 6 GB</span>
<span class="t" style="left:1176.40px;top:719.65px;font-size:14px;color:#212121;letter-spacing:-0.542px;">RAM</span>
<div class="a" style="left:1313px;top:710.8px;width:12.6px;height:12.6px;background:#3ca56c;border-radius:50%;"></div>
<span class="t" style="left:1333.60px;top:710.65px;font-size:14px;color:#212121;letter-spacing:-0.251px;">Running</span>
<span class="t" style="left:1446.00px;top:709.65px;font-size:14px;color:#212121;letter-spacing:-0.150px;">2 days ago</span>
<span class="t" style="left:1571.80px;top:709.65px;font-size:14px;color:#212121;letter-spacing:-0.150px;">2 days ago</span>
<div class="a" style="left:901px;top:754px;width:783px;height:1px;background:#e0e0e0;"></div>
<span class="t" style="left:917.50px;top:762.65px;font-size:14px;color:#2a5ad0;letter-spacing:0.107px;">TestPost3no-</span>
<span class="t" style="left:917.50px;top:782.65px;font-size:14px;color:#2a5ad0;letter-spacing:0.113px;">4qsnsf69-</span>
<span class="t" style="left:917.50px;top:802.65px;font-size:14px;color:#2a5ad0;letter-spacing:-0.161px;">slave2</span>
<span class="t" style="left:1056.60px;top:782.65px;font-size:14px;color:#212121;letter-spacing:-0.247px;">False</span>
<span class="t" style="left:1176.40px;top:772.65px;font-size:14px;color:#212121;letter-spacing:-0.630px;">2 vCPU · 6 GB</span>
<span class="t" style="left:1176.40px;top:792.65px;font-size:14px;color:#212121;letter-spacing:-0.542px;">RAM</span>
<div class="a" style="left:1313px;top:783.8px;width:12.6px;height:12.6px;background:#3ca56c;border-radius:50%;"></div>
<span class="t" style="left:1333.60px;top:783.65px;font-size:14px;color:#212121;letter-spacing:-0.251px;">Running</span>
<span class="t" style="left:1446.00px;top:782.65px;font-size:14px;color:#212121;letter-spacing:-0.150px;">2 days ago</span>
<span class="t" style="left:1571.80px;top:782.65px;font-size:14px;color:#212121;letter-spacing:-0.150px;">2 days ago</span>
<div class="a" style="left:901px;top:827px;width:783px;height:1px;background:#e0e0e0;"></div>
<span class="t" style="left:1335.00px;top:846.25px;font-size:14px;color:#212121;letter-spacing:-0.197px;">Rows per page:</span>
<span class="t" style="left:1447.40px;top:846.75px;font-size:14px;color:#212121;letter-spacing:0.061px;">25</span>
<svg class="a" style="left:1462.5px;top:842px;" width="24" height="24" viewBox="0 0 24 24" fill="#616161"><path d="M7 10l5 5 5-5z"/></svg>
<span class="t" style="left:1519.50px;top:846.25px;font-size:14px;color:#212121;letter-spacing:-0.098px;">1-3 of 3</span>
<svg class="a" style="left:1597px;top:841px;" width="24" height="24" viewBox="0 0 24 24" fill="#c4c4c4"><path d="M15.410 7.410L14 6l-6 6 6 6 1.410-1.410L10.830 12z"/></svg>
<svg class="a" style="left:1647px;top:841px;" width="24" height="24" viewBox="0 0 24 24" fill="#c4c4c4"><path d="M10 6L8.590 7.410 13.170 12l-4.580 4.590L10 18l6-6z"/></svg>
<div class="a" style="left:1867.5px;top:414.8px;width:35px;height:101.2px;background:#f59108;border-radius:4px 0 0 4px;"></div>
<span class="t" style="left:1848.89px;top:457.73px;font-size:15.5px;color:#fff;font-weight:700;letter-spacing:-0.127px;transform:rotate(-90deg);transform-origin:50% 50%;">Feedback</span>
<div class="a" style="left:1816.3px;top:843.8px;width:61.8px;height:61.8px;border-radius:50% 50% 0 50%;background:linear-gradient(97deg,#7397d3 0%,#4a9fd0 35%,#1aadcc 70%,#08b0cb 100%);box-shadow:-1px 3px 7px rgba(0,0,0,.22);"></div>
<svg class="a" style="left:1829px;top:852px;" width="40" height="44" viewBox="0 0 40 44" fill="#fff"><g fill="none" stroke="#fff" stroke-width="1.25"><circle cx="21.100" cy="18.600" r="3"/><circle cx="32.700" cy="8.900" r="2.700"/><circle cx="19.400" cy="9.200" r="2.200"/><circle cx="10.100" cy="20.300" r="2.400"/><circle cx="29" cy="28.600" r="2.600"/><path d="M23.300 16.600l7.400-5.900M20.600 15.600l-.8-4.200M18.100 19.100l-5.600.9M23 21l4.300 5.700"/></g><path d="M0 39.700L11.800 26h6.400v13.700h-4.400v-3.400H8.400l-2.900 3.400zM10.300 33.800h3.500v-4.100zM19.700 26h3.800v13.700h-3.800z" fill="#fff"/></svg>
<span class="t" style="left:1599.80px;top:839.72px;font-size:20.5px;color:rgba(140,140,140,.48);letter-spacing:-0.386px;">Activate Windows</span>
<span class="t" style="left:1599.40px;top:863.57px;font-size:15px;color:rgba(140,140,140,.48);letter-spacing:-0.051px;">Go to Settings to activate Windows.</span>
<div class="a" style="left:1899.3px;top:846.2px;width:41.2px;height:41.2px;background:#050505;border-radius:50%;box-sizing:border-box;border:1.5px solid #3b6478;"></div>
<svg class="a" style="left:1911px;top:858px;" width="10" height="18" viewBox="0 0 10 18" fill="none"><path d="M9.500 2.200L2.400 8.900l7.100 6.700" fill="none" stroke="#8c8c8c" stroke-width="3"/></svg>
</body></html>
